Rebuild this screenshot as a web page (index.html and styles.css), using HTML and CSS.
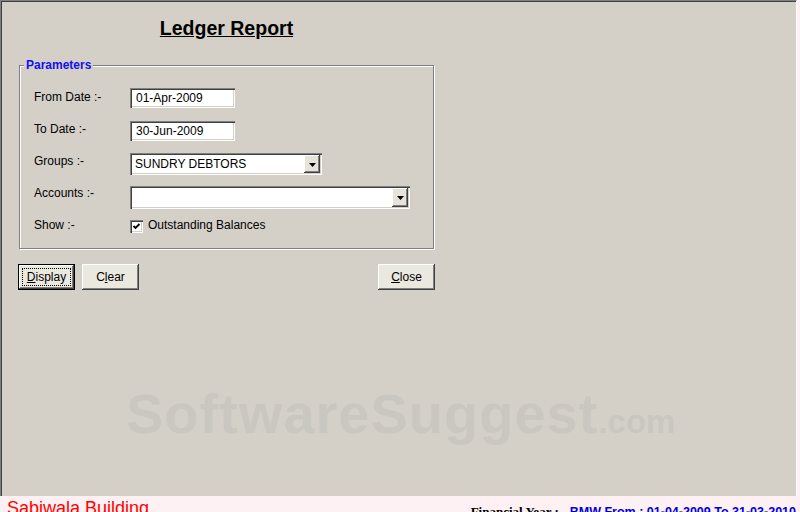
FILE: index.html
```html
<!DOCTYPE html>
<html lang="en">
<head>
  <meta charset="UTF-8">
  <title>Ledger Report</title>
  <link rel="stylesheet" href="styles.css">
</head>
<body>

  <div class="window">
    <div class="form">
      <h1 class="title">Ledger Report</h1>

      <fieldset class="params">
        <legend>Parameters</legend>
        <div class="rows">
          <div class="row">
            <label>From Date :-</label>
            <div class="field">01-Apr-2009</div>
          </div>
          <div class="row">
            <label>To Date :-</label>
            <div class="field down1">30-Jun-2009</div>
          </div>
          <div class="row">
            <label>Groups :-</label>
            <div class="combo groups down1">
              <span class="combo-text">SUNDRY DEBTORS</span>
              <span class="combo-btn">
                <svg width="7" height="4" viewBox="0 0 7 4"><polygon points="0,0 7,0 3.5,4" fill="#000"/></svg>
              </span>
            </div>
          </div>
          <div class="row">
            <label>Accounts :-</label>
            <div class="combo accounts down2">
              <span class="combo-text"></span>
              <span class="combo-btn">
                <svg width="7" height="4" viewBox="0 0 7 4"><polygon points="0,0 7,0 3.5,4" fill="#000"/></svg>
              </span>
            </div>
          </div>
          <div class="row">
            <label>Show :-</label>
            <div class="check">
              <span class="check-box">
                <svg width="9" height="9" viewBox="0 0 9 9"><polyline points="1.5,4 3.5,6 7.5,2" fill="none" stroke="#000" stroke-width="1.8"/></svg>
              </span>
              <span class="check-label">Outstanding Balances</span>
            </div>
          </div>
        </div>
      </fieldset>

      <div class="actions">
        <button class="btn default"><span class="focus"><u>D</u>isplay</span></button>
        <button class="btn">C<u>l</u>ear</button>
        <button class="btn close"><u>C</u>lose</button>
      </div>
    </div>

    <!-- watermark from the screenshot source -->
    <div class="watermark">SoftwareSuggest<span class="dotcom">.com</span></div>
  </div>

  <div class="status">
    <span class="company">Sabiwala Building</span>
    <span class="fy">Financial Year :</span>
    <span class="period">BMW From : 01-04-2009 To 31-03-2010</span>
  </div>

</body>
</html>
```

FILE: styles.css
```css
* {
  box-sizing: border-box;
}
html, body {
  margin: 0;
  height: 512px;
  overflow: hidden;
}
body {
  width: 800px;
  background: #fdf1f3;
  font-family: 'Liberation Sans', Arial, sans-serif;
  font-size: 12px;
  color: #000;
}
.window {
  position: relative;
  width: 797px;
  height: 496px;
  background: #d4d0c8;
  border-left: 1px solid #808080;
  border-top: 1px solid #808080;
  border-right: 1px solid #fff;
  box-shadow: inset 1px 1px #404040;
  padding-left: 17px;
}
.form {
  width: 417px;
}
.title {
  margin: 15px 0 0 0;
  text-align: center;
  font-size: 19.5px;
  line-height: 24px;
  font-weight: 700;
  text-decoration: underline;
}
.params {
  margin: 18px 1px 0 1px;
  padding: 0;
  min-width: 0;
  border: 1px solid #808080;
  box-shadow: inset 1px 1px #fff, 1px 1px #fff;
}
.params legend {
  margin-left: 4px;
  padding: 0 2px;
  font-weight: 700;
  line-height: 14px;
  color: #1010f0;
  background: #d4d0c8;
}
.rows {
  padding: 16px 0 0 14px;
}
.row {
  display: flex;
  align-items: flex-start;
  height: 32px;
}
.row label {
  width: 96px;
  padding-top: 2px;
  line-height: 14px;
}
.down1 {
  margin-top: 1px;
}
.down2 {
  margin-top: 2px;
}
.field {
  width: 105px;
  height: 20px;
  padding-left: 6px;
  line-height: 20px;
  background: #fff;
  box-shadow: inset 1px 1px #808080, inset 2px 2px #404040, inset -1px -1px #fff, inset -2px -2px #d4d0c8;
}
.combo {
  display: flex;
  height: 22px;
  padding: 2px;
  background: #fff;
  box-shadow: inset 1px 1px #808080, inset 2px 2px #404040, inset -1px -1px #fff, inset -2px -2px #d4d0c8;
}
.combo.groups {
  width: 192px;
}
.combo.accounts {
  width: 280px;
  height: 23px;
}
.combo-text {
  flex: 1;
  padding-left: 3px;
  line-height: 19px;
}
.combo-btn {
  width: 16px;
  display: flex;
  align-items: center;
  justify-content: center;
  padding-top: 1px;
  background: #e6e3da;
  box-shadow: inset -1px -1px #404040, inset 1px 1px #fff, inset -2px -2px #808080;
}
.check {
  display: flex;
  align-items: flex-start;
  gap: 5px;
}
.check-box {
  width: 13px;
  height: 13px;
  margin-top: 4px;
  display: flex;
  align-items: center;
  justify-content: center;
  background: #fff;
  box-shadow: inset 1px 1px #808080, inset 2px 2px #404040, inset -1px -1px #fff, inset -2px -2px #d4d0c8;
}
.check-label {
  padding-top: 2px;
  line-height: 14px;
}
.actions {
  display: flex;
  gap: 7px;
  margin-top: 15px;
}
.btn {
  width: 57px;
  height: 26px;
  padding: 0;
  border: none;
  background: #ebe8e0;
  font-family: 'Liberation Sans', Arial, sans-serif;
  font-size: 12px;
  color: #000;
  box-shadow: inset -1px -1px #404040, inset 1px 1px #fff, inset -2px -2px #808080;
}
.btn.default {
  border: 1px solid #000;
}
.btn .focus {
  display: block;
  margin: 3px;
  border: 1px dotted #000;
  line-height: 16px;
}
.btn.close {
  margin-left: auto;
}
.watermark {
  position: absolute;
  left: 125px;
  top: 385px;
  font-size: 56px;
  line-height: 56px;
  font-weight: 700;
  letter-spacing: 1px;
  color: #cac7c1;
  white-space: nowrap;
}
.watermark .dotcom {
  font-size: 33px;
  letter-spacing: 0;
}
.status {
  display: flex;
  align-items: flex-start;
  height: 16px;
  overflow: hidden;
}
.company {
  padding: 2px 0 0 7px;
  font-size: 18px;
  line-height: 20px;
  color: #f00;
}
.fy {
  margin-left: auto;
  margin-right: 11px;
  padding-top: 8px;
  font-family: 'Liberation Serif', 'Times New Roman', serif;
  font-weight: 700;
  font-size: 13px;
  line-height: 16px;
}
.period {
  padding: 8px 4px 0 0;
  font-weight: 700;
  font-size: 12.5px;
  line-height: 16px;
  color: #0000e0;
}
```
